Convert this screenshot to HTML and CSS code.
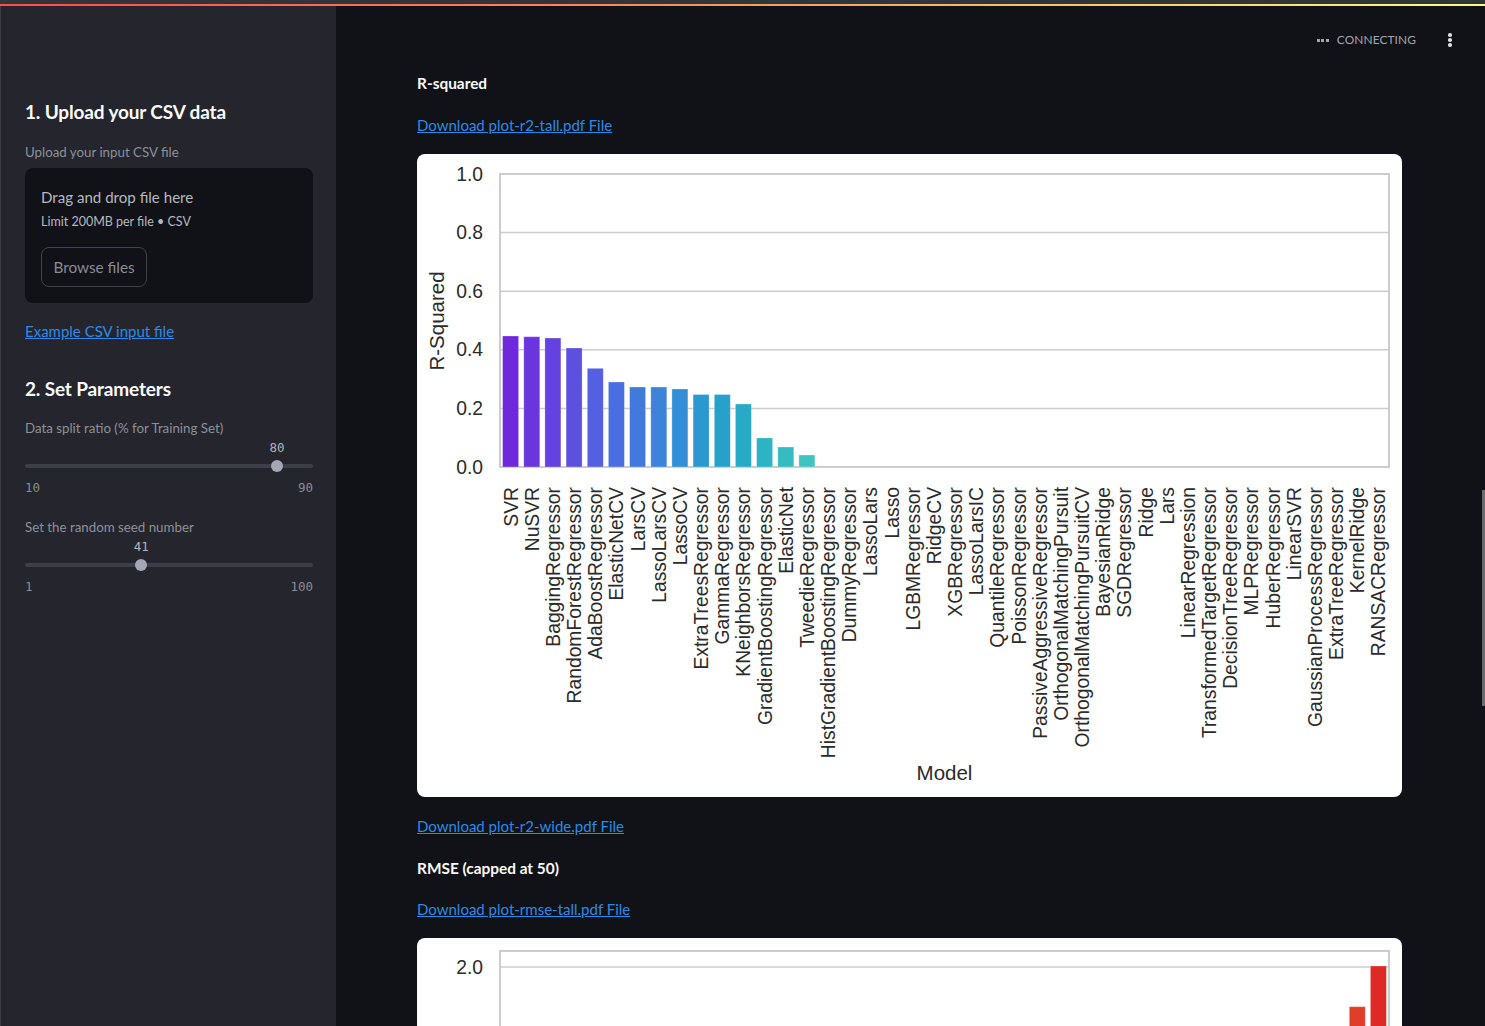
FILE: index.html
```html
<!DOCTYPE html>
<html lang="en">
<head>
<meta charset="utf-8">
<title>ML Regression App</title>
<link rel="stylesheet" href="styles.css">
</head>
<body>
<div class="chrome"></div>
<div class="deco"></div>
<div class="app">
  <aside class="sidebar">
    <h2 class="side-h">1. Upload your CSV data</h2>
    <div class="side-label first">Upload your input CSV file</div>
    <div class="dropzone">
      <div class="dz-title">Drag and drop file here</div>
      <div class="dz-limit">Limit 200MB per file • CSV</div>
      <button class="browse">Browse files</button>
    </div>
    <a class="side-link" href="#">Example CSV input file</a>
    <h2 class="side-h second">2. Set Parameters</h2>
    <div class="side-label">Data split ratio (% for Training Set)</div>
    <div class="slider">
      <div class="slider-val"><span class="val" style="left: 87.5%">80</span></div>
      <div class="slider-track"><div class="track"></div><span class="thumb" style="left: 87.5%"></span></div>
      <div class="slider-range"><span>10</span><span>90</span></div>
    </div>
    <div class="side-label gap">Set the random seed number</div>
    <div class="slider">
      <div class="slider-val"><span class="val" style="left: 40.4%">41</span></div>
      <div class="slider-track"><div class="track"></div><span class="thumb" style="left: 40.4%"></span></div>
      <div class="slider-range"><span>1</span><span>100</span></div>
    </div>
  </aside>
  <main class="main">
    <header class="header">
      <div class="status">
        <span class="status-dots"><i></i><i></i><i></i></span>
        <span class="status-text">CONNECTING</span>
      </div>
      <div class="kebab"><i></i><i></i><i></i></div>
    </header>
    <section class="content">
      <div class="subhead">R-squared</div>
      <a class="dl-link" href="#">Download plot-r2-tall.pdf File</a>
      <div class="card">
        <svg class="chart" width="985" height="643" viewBox="0 0 985 643" xmlns="http://www.w3.org/2000/svg">
          <g class="grid">
            <line x1="83" y1="78.6" x2="972" y2="78.6"/>
            <line x1="83" y1="137.2" x2="972" y2="137.2"/>
            <line x1="83" y1="195.8" x2="972" y2="195.8"/>
            <line x1="83" y1="254.4" x2="972" y2="254.4"/>
          </g>
          <rect class="frame" x="83" y="20" width="889" height="293"/>
          <g class="bars">
            <rect x="85.6" y="182" width="16" height="131" fill="#7029da"/>
            <rect x="106.8" y="182.7" width="16" height="130.3" fill="#6a35dc"/>
            <rect x="127.9" y="184" width="16" height="129" fill="#6442de"/>
            <rect x="149.1" y="194" width="16" height="119" fill="#5c51df"/>
            <rect x="170.3" y="214.3" width="16" height="98.7" fill="#5460e0"/>
            <rect x="191.4" y="228" width="16" height="85" fill="#4a6ddf"/>
            <rect x="212.6" y="233" width="16" height="80" fill="#4279dd"/>
            <rect x="233.8" y="233" width="16" height="80" fill="#3b84da"/>
            <rect x="254.9" y="235" width="16" height="78" fill="#348ed6"/>
            <rect x="276.1" y="240.5" width="16" height="72.5" fill="#2d98d0"/>
            <rect x="297.3" y="240.5" width="16" height="72.5" fill="#28a1ca"/>
            <rect x="318.4" y="250" width="16" height="63" fill="#26aac6"/>
            <rect x="339.6" y="284" width="16" height="29" fill="#2db4c3"/>
            <rect x="360.8" y="293" width="16" height="20" fill="#35bcc1"/>
            <rect x="381.9" y="301" width="16" height="12" fill="#40c4c0"/>
          </g>
          <g class="yticks">
            <text x="66" y="20">1.0</text>
            <text x="66" y="78.6">0.8</text>
            <text x="66" y="137.2">0.6</text>
            <text x="66" y="195.8">0.4</text>
            <text x="66" y="254.4">0.2</text>
            <text x="66" y="313">0.0</text>
          </g>
          <g class="xticks">
            <text transform="translate(100.5,333) rotate(-90)">SVR</text>
            <text transform="translate(121.6,333) rotate(-90)">NuSVR</text>
            <text transform="translate(142.8,333) rotate(-90)">BaggingRegressor</text>
            <text transform="translate(164.0,333) rotate(-90)">RandomForestRegressor</text>
            <text transform="translate(185.1,333) rotate(-90)">AdaBoostRegressor</text>
            <text transform="translate(206.3,333) rotate(-90)">ElasticNetCV</text>
            <text transform="translate(227.5,333) rotate(-90)">LarsCV</text>
            <text transform="translate(248.6,333) rotate(-90)">LassoLarsCV</text>
            <text transform="translate(269.8,333) rotate(-90)">LassoCV</text>
            <text transform="translate(291.0,333) rotate(-90)">ExtraTreesRegressor</text>
            <text transform="translate(312.1,333) rotate(-90)">GammaRegressor</text>
            <text transform="translate(333.3,333) rotate(-90)">KNeighborsRegressor</text>
            <text transform="translate(354.5,333) rotate(-90)">GradientBoostingRegressor</text>
            <text transform="translate(375.6,333) rotate(-90)">ElasticNet</text>
            <text transform="translate(396.8,333) rotate(-90)">TweedieRegressor</text>
            <text transform="translate(418.0,333) rotate(-90)">HistGradientBoostingRegressor</text>
            <text transform="translate(439.1,333) rotate(-90)">DummyRegressor</text>
            <text transform="translate(460.3,333) rotate(-90)">LassoLars</text>
            <text transform="translate(481.5,333) rotate(-90)">Lasso</text>
            <text transform="translate(502.6,333) rotate(-90)">LGBMRegressor</text>
            <text transform="translate(523.8,333) rotate(-90)">RidgeCV</text>
            <text transform="translate(545.0,333) rotate(-90)">XGBRegressor</text>
            <text transform="translate(566.1,333) rotate(-90)">LassoLarsIC</text>
            <text transform="translate(587.3,333) rotate(-90)">QuantileRegressor</text>
            <text transform="translate(608.5,333) rotate(-90)">PoissonRegressor</text>
            <text transform="translate(629.6,333) rotate(-90)">PassiveAggressiveRegressor</text>
            <text transform="translate(650.8,333) rotate(-90)">OrthogonalMatchingPursuit</text>
            <text transform="translate(672.0,333) rotate(-90)">OrthogonalMatchingPursuitCV</text>
            <text transform="translate(693.1,333) rotate(-90)">BayesianRidge</text>
            <text transform="translate(714.3,333) rotate(-90)">SGDRegressor</text>
            <text transform="translate(735.5,333) rotate(-90)">Ridge</text>
            <text transform="translate(756.6,333) rotate(-90)">Lars</text>
            <text transform="translate(777.8,333) rotate(-90)">LinearRegression</text>
            <text transform="translate(799.0,333) rotate(-90)">TransformedTargetRegressor</text>
            <text transform="translate(820.1,333) rotate(-90)">DecisionTreeRegressor</text>
            <text transform="translate(841.3,333) rotate(-90)">MLPRegressor</text>
            <text transform="translate(862.5,333) rotate(-90)">HuberRegressor</text>
            <text transform="translate(883.6,333) rotate(-90)">LinearSVR</text>
            <text transform="translate(904.8,333) rotate(-90)">GaussianProcessRegressor</text>
            <text transform="translate(926.0,333) rotate(-90)">ExtraTreeRegressor</text>
            <text transform="translate(947.1,333) rotate(-90)">KernelRidge</text>
            <text transform="translate(968.3,333) rotate(-90)">RANSACRegressor</text>
          </g>
          <text class="axis-label" x="527.5" y="626" text-anchor="middle">Model</text>
          <text class="axis-label" transform="translate(27,167) rotate(-90)" text-anchor="middle">R-Squared</text>
        </svg>
      </div>
      <a class="dl-link gap17" href="#">Download plot-r2-wide.pdf File</a>
      <div class="subhead gap18">RMSE (capped at 50)</div>
      <a class="dl-link gap17" href="#">Download plot-rmse-tall.pdf File</a>
      <div class="card short">
        <svg class="chart" width="985" height="100" viewBox="0 0 985 100" xmlns="http://www.w3.org/2000/svg">
          <g class="grid">
            <line x1="83" y1="29" x2="972" y2="29"/>
          </g>
          <rect class="frame" x="83" y="13" width="889" height="300"/>
          <g class="bars">
            <rect x="932.3" y="68.7" width="16" height="244.3" fill="#e03d2b"/>
            <rect x="953.4" y="28" width="16" height="285" fill="#dd2a25"/>
          </g>
          <g class="yticks">
            <text x="66" y="29">2.0</text>
          </g>
        </svg>
      </div>
    </section>
    <div class="scrollbar"></div>
  </main>
</div>
</body>
</html>
```

FILE: styles.css
```css
* { box-sizing: border-box; }

html, body {
  margin: 0;
  padding: 0;
}

body {
  width: 1485px;
  height: 1026px;
  overflow: hidden;
  background: #111218;
  font-family: Lato, "Noto Sans", sans-serif;
  color: #fafafa;
}

.chrome {
  height: 4px;
  background: #303538;
}

.deco {
  height: 2px;
  background: linear-gradient(90deg, #ff4b4b 0%, #ff8f55 45%, #fffd80 100%);
}

.app {
  display: flex;
  height: 1020px;
}

/* ---------- Sidebar ---------- */
.sidebar {
  flex: none;
  width: 336px;
  height: 100%;
  background: #24252d;
  border-left: 1px solid #3a3c44;
  padding: 92px 23px 0 24px;
  display: flex;
  flex-direction: column;
}

.side-h {
  margin: 0;
  font-size: 19px;
  line-height: 28px;
  font-weight: 700;
  letter-spacing: -0.15px;
  color: #fafafa;
}

.side-h.second {
  margin-top: 32px;
}

.side-label {
  font-size: 13.3px;
  line-height: 20px;
  color: #8e9099;
  margin-top: 15px;
}

.side-label.first {
  margin-top: 16px;
}

.side-label.gap {
  margin-top: 21px;
}

.dropzone {
  margin-top: 6px;
  height: 135px;
  background: #111218;
  border-radius: 8px;
  padding: 18px 16px 16px 16px;
  display: flex;
  flex-direction: column;
  align-items: flex-start;
}

.dz-title {
  font-size: 15.1px;
  line-height: 22px;
  color: #b6b8bf;
}

.dz-limit {
  margin-top: 5px;
  font-size: 12.5px;
  line-height: 18px;
  color: #b6b8bf;
}

.browse {
  margin-top: 16px;
  height: 40px;
  width: 106px;
  background: transparent;
  border: 1px solid #3f414a;
  border-radius: 8px;
  color: #8a8c93;
  font-family: Lato, "Noto Sans", sans-serif;
  font-size: 15.3px;
  padding: 0;
}

.side-link {
  margin-top: 16px;
  font-size: 15px;
  line-height: 24px;
  color: #2b8ae8;
  text-decoration: underline;
  align-self: flex-start;
}

.slider {
  margin-top: 2px;
  display: flex;
  flex-direction: column;
}

.slider-val {
  position: relative;
  height: 16px;
}

.val {
  position: absolute;
  top: 0;
  transform: translateX(-50%);
  font-family: "DejaVu Sans Mono", "Liberation Mono", monospace;
  font-size: 12.5px;
  line-height: 16px;
  color: #b0b3bd;
}

.slider-track {
  position: relative;
  height: 20px;
  display: flex;
  align-items: center;
}

.track {
  width: 100%;
  height: 4px;
  border-radius: 2px;
  background: #3d3f48;
}

.thumb {
  position: absolute;
  top: 4px;
  width: 12px;
  height: 12px;
  margin-left: -6px;
  border-radius: 50%;
  background: #a3a7b6;
}

.slider-range {
  margin-top: 4px;
  display: flex;
  justify-content: space-between;
  font-family: "DejaVu Sans Mono", "Liberation Mono", monospace;
  font-size: 12.5px;
  line-height: 16px;
  color: #8a8c93;
}

/* ---------- Main ---------- */
.main {
  flex: 1;
  position: relative;
  display: flex;
  flex-direction: column;
  min-width: 0;
}

.header {
  height: 56px;
  padding: 12px 25px 0 0;
  display: flex;
  justify-content: flex-end;
  align-items: center;
  gap: 24px;
  flex: none;
}

.status {
  display: flex;
  align-items: center;
  gap: 8px;
}

.status-dots {
  display: flex;
  gap: 1.5px;
}

.status-dots i {
  display: block;
  width: 3px;
  height: 3px;
  background: #a3a5ad;
}

.status-text {
  font-size: 11.9px;
  line-height: 16px;
  letter-spacing: 0.1px;
  color: #a3a5ad;
}

.kebab {
  width: 20px;
  display: flex;
  flex-direction: column;
  align-items: center;
  gap: 1.4px;
}

.kebab i {
  display: block;
  width: 3.6px;
  height: 3.6px;
  border-radius: 50%;
  background: #dcdde2;
}

.content {
  padding: 0 83px 0 81px;
  display: flex;
  flex-direction: column;
  align-items: flex-start;
}

.subhead {
  margin-top: 9px;
  font-size: 15.4px;
  line-height: 24px;
  font-weight: 700;
  color: #fafafa;
}

.subhead.gap18 {
  margin-top: 18px;
}

.dl-link {
  display: block;
  margin-top: 18px;
  font-size: 15px;
  line-height: 24px;
  color: #2b8ae8;
  text-decoration: underline;
}

.dl-link.gap17 {
  margin-top: 17px;
}

.card {
  flex: none;
  margin-top: 17px;
  width: 985px;
  height: 643px;
  background: #ffffff;
  border-radius: 8px;
  overflow: hidden;
}

.card.short {
  height: 100px;
  border-radius: 8px 8px 0 0;
}

.chart {
  display: block;
}

.grid line {
  stroke: #cccccc;
  stroke-width: 1.5;
}

.frame {
  fill: none;
  stroke: #cccccc;
  stroke-width: 2;
}

.bars rect {
  stroke: rgba(255, 255, 255, 0.35);
  stroke-width: 0.8;
}

.yticks text {
  font-family: "Liberation Sans", Arial, sans-serif;
  font-size: 19.3px;
  fill: #2b2b2b;
  text-anchor: end;
  dominant-baseline: central;
}

.xticks text {
  font-family: "Liberation Sans", Arial, sans-serif;
  font-size: 19.3px;
  fill: #2b2b2b;
  text-anchor: end;
}

.axis-label {
  font-family: "Liberation Sans", Arial, sans-serif;
  font-size: 20.5px;
  fill: #2b2b2b;
}

.scrollbar {
  position: absolute;
  right: 0;
  top: 484px;
  width: 3px;
  height: 216px;
  background: #6b6b6b;
}
```
